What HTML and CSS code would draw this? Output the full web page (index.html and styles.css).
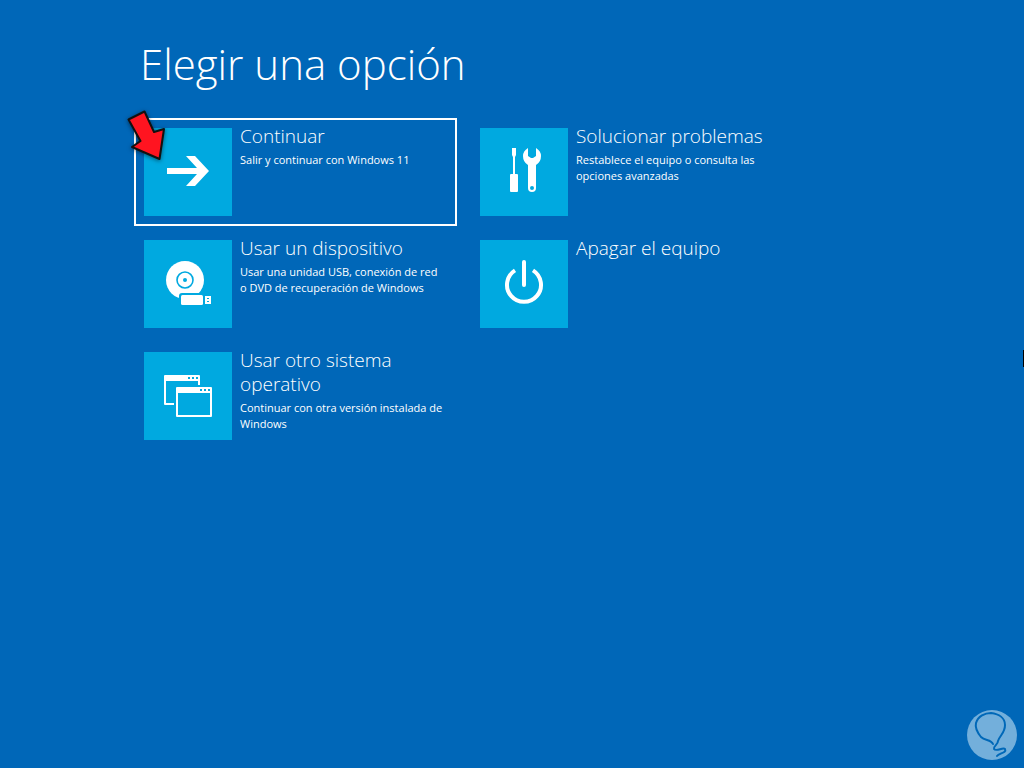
FILE: index.html
```html
<!DOCTYPE html>
<html lang="es">
<head>
<meta charset="utf-8">
<meta name="viewport" content="width=device-width, initial-scale=1">
<title>Elegir una opción</title>
<link rel="stylesheet" href="styles.css">
</head>
<body>
<main class="screen">
  <h1 class="heading">Elegir una opción</h1>
  <div class="options">
    <button class="option option-selected" type="button">
      <svg class="tile" viewBox="0 0 88 88" aria-hidden="true">
        <path fill="#fff" d="M23 40h30L42 28h9l14 15-14 15h-9l11-12H23z"/>
      </svg>
      <span class="text">
        <span class="title">Continuar</span>
        <span class="desc">Salir y continuar con Windows 11</span>
      </span>
      <svg class="pointer" viewBox="0 0 44 56" aria-hidden="true">
        <path d="M6.500 12.500 22.500 4.500 32 25 42 22 37.500 52 10 40 18.500 34z" fill="#ff1420" stroke="#111" stroke-width="2" stroke-linejoin="round"/>
      </svg>
    </button>
    <button class="option" type="button">
      <svg class="tile" viewBox="0 0 88 88" aria-hidden="true">
        <path fill="#fff" d="M32 20h4v7l-1 2v17h2q1 0 1 1v16q0 1-1 1h-6q-1 0-1-1V47q0-1 1-1h2V29l-1-2z"/>
        <path fill="#fff" fill-rule="evenodd" d="M48 20v8l3 2h2l3-2v-8q5 3 5 8 0 6-5 9v23a4 4 0 0 1-8 0V37q-5-3-5-9 0-5 5-8zM52 58a2 2 0 1 0 0 4 2 2 0 0 0 0-4z"/>
      </svg>
      <span class="text">
        <span class="title">Solucionar problemas</span>
        <span class="desc">Restablece el equipo o consulta las opciones avanzadas</span>
      </span>
    </button>
    <button class="option" type="button">
      <svg class="tile" viewBox="0 0 88 88" aria-hidden="true">
        <circle cx="41" cy="40" r="19" fill="#fff"/>
        <circle cx="41" cy="40" r="8" fill="none" stroke="#00a9e0" stroke-width="1.6"/>
        <circle cx="41" cy="40" r="2" fill="#00a9e0"/>
        <rect x="35" y="53" width="26" height="14" rx="3" fill="#00a9e0"/>
        <rect x="37" y="55" width="22" height="10" rx="1.5" fill="#fff"/>
        <path fill="#fff" fill-rule="evenodd" d="M61 56h6v8h-6zM63 58v1h2v-1zM63 61v1h2v-1z"/>
      </svg>
      <span class="text">
        <span class="title">Usar un dispositivo</span>
        <span class="desc">Usar una unidad USB, conexión de red o DVD de recuperación de Windows</span>
      </span>
    </button>
    <button class="option" type="button">
      <svg class="tile" viewBox="0 0 88 88" aria-hidden="true">
        <path d="M35 30.400A17 17 0 1 0 53 30.400" fill="none" stroke="#fff" stroke-width="4"/>
        <path d="M44 22V45" fill="none" stroke="#fff" stroke-width="4" stroke-linecap="round"/>
      </svg>
      <span class="text">
        <span class="title">Apagar el equipo</span>
      </span>
    </button>
    <button class="option" type="button">
      <svg class="tile" viewBox="0 0 88 88" aria-hidden="true">
        <path fill="#fff" fill-rule="evenodd" d="M21 23h34q1 0 1 1v9h-2v-4H22v22h8v2h-9q-1 0-1-1V24q0-1 1-1zM44 25v2h2v-2zM48 25v2h2v-2zM52 25v2h2v-2z"/>
        <path fill="#fff" fill-rule="evenodd" d="M33 35h34q1 0 1 1v28q0 1-1 1H33q-1 0-1-1V36q0-1 1-1zM34 41v22h32V41zM56 37v2h2v-2zM60 37v2h2v-2zM64 37v2h2v-2z"/>
      </svg>
      <span class="text">
        <span class="title">Usar otro sistema operativo</span>
        <span class="desc">Continuar con otra versión instalada de Windows</span>
      </span>
    </button>
  </div>
</main>
<span class="edge-mark"></span>
<svg class="watermark" viewBox="0 0 50 50" aria-hidden="true">
  <circle cx="25" cy="25" r="25" fill="#73afdb"/>
  <path d="M26 34C24 29 18 31 14 27 10 22 8 17 9 13 11 6 18 3 24 3 32 4 38 8 38 15 38 23 33 25 31 31 31 35 26 36 27 39 29 42 36 37 38 39 40 43 32 43 30 46" fill="none" stroke="#0068b8" stroke-width="2" stroke-linecap="round"/>
</svg>
</body>
</html>
```
FILE: styles.css
```css
* {
  box-sizing: border-box;
}

body {
  margin: 0;
  min-height: 100vh;
  background: #0067b8;
  color: #fff;
  font-family: "Open Sans", "Noto Sans", sans-serif;
}

.screen {
  max-width: 793px;
  padding: 34px 0 40px 134px;
}

.heading {
  margin: 0 0 24px;
  padding-left: 6px;
  font-size: 42px;
  line-height: 60px;
  font-weight: 300;
}

.options {
  display: grid;
  grid-template-columns: repeat(2, minmax(0, 1fr));
  gap: 4px 13px;
}

.option {
  position: relative;
  display: flex;
  align-items: flex-start;
  gap: 8px;
  padding: 4px 8px 8px;
  border: 2px solid transparent;
  background: none;
  color: inherit;
  font-family: inherit;
  text-align: left;
  cursor: pointer;
}

.option-selected {
  border-color: #fff;
}

.tile {
  flex: none;
  width: 88px;
  height: 88px;
  margin-top: 4px;
  background: #00a9e0;
}

.text {
  display: flex;
  flex-direction: column;
  gap: 4px;
  max-width: 204px;
}

.title {
  font-size: 19px;
  line-height: 24px;
  font-weight: 300;
}

.desc {
  font-size: 11px;
  line-height: 16px;
}

.pointer {
  position: absolute;
  top: -13px;
  left: -14px;
  width: 44px;
  height: 56px;
  filter: drop-shadow(0 1px 2px rgba(0, 0, 0, 0.5));
}

.edge-mark {
  position: fixed;
  top: 350px;
  right: 0;
  width: 1px;
  height: 17px;
  background: #000;
}

.watermark {
  position: fixed;
  right: 7px;
  bottom: 8px;
  width: 50px;
  height: 50px;
}
```
